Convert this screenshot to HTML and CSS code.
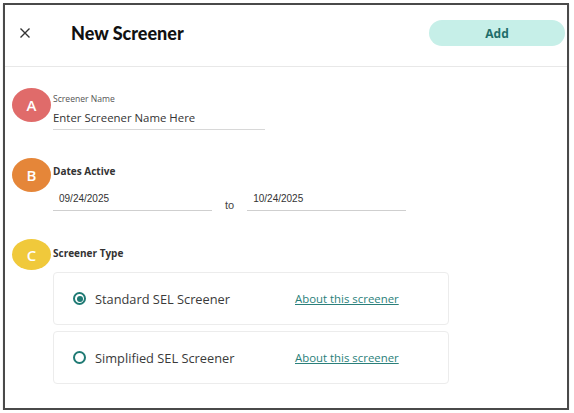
FILE: index.html
```html
<!DOCTYPE html>
<html>
<head>
<meta charset="utf-8">
<link rel="stylesheet" href="styles.css">
</head>
<body>
<div class="frame">
  <header class="header">
    <svg class="close" width="10" height="10" viewBox="0 0 10 10"><path d="M0.5 0.5 L9.5 9.5 M9.5 0.5 L0.5 9.5" stroke="#333" stroke-width="1.4" fill="none"/></svg>
    <h1 class="title">New Screener</h1>
    <button class="add">Add</button>
  </header>

  <section class="row row-a">
    <div class="badge badge-a">A</div>
    <div class="content">
      <div class="small-label">Screener Name</div>
      <div class="name-input">Enter Screener Name Here</div>
    </div>
  </section>

  <section class="row row-b">
    <div class="badge badge-b">B</div>
    <div class="content">
      <div class="bold-label">Dates Active</div>
      <div class="dates">
        <div class="date-input">09/24/2025</div>
        <div class="to">to</div>
        <div class="date-input">10/24/2025</div>
      </div>
    </div>
  </section>

  <section class="row row-c">
    <div class="badge badge-c">C</div>
    <div class="content">
      <div class="bold-label label-c">Screener Type</div>
      <div class="cards">
        <div class="card">
          <span class="radio checked"></span>
          <span class="option">Standard SEL Screener</span>
          <a class="about">About this screener</a>
        </div>
        <div class="card">
          <span class="radio"></span>
          <span class="option">Simplified SEL Screener</span>
          <a class="about">About this screener</a>
        </div>
      </div>
    </div>
  </section>
</div>
</body>
</html>
```

FILE: styles.css
```css
* { box-sizing: border-box; }
html, body { margin: 0; padding: 0; background: #fff; }
body { font-family: "Open Sans", "Noto Sans", sans-serif; color: #333; }

.frame {
  margin: 3px 0 0 3px;
  width: 566px;
  height: 407px;
  border: 2px solid #4a4a4a;
  box-shadow: 0 1px 1px #bbb;
  background: #fff;
}

.header {
  display: flex;
  align-items: flex-start;
  height: 62px;
  padding-top: 15px;
  border-bottom: 1px solid #e8e8e8;
}
.close { margin: 8px 0 0 15px; flex: none; }
.title {
  margin: 0 0 0 41px;
  font-family: Lato, sans-serif;
  font-weight: 900;
  font-size: 18px;
  line-height: 26px;
  color: #111;
}
.add {
  margin-left: auto;
  margin-right: 2px;
  width: 136px;
  height: 26px;
  border: none;
  border-radius: 13px;
  background: #c6efe8;
  color: #1f6d69;
  font-family: "Open Sans", sans-serif;
  font-weight: 700;
  font-size: 12px;
  padding: 0;
}

.row { display: flex; align-items: flex-start; padding-left: 7px; }
.row-a { margin-top: 21px; }
.row-b { margin-top: 28px; }
.row-c { margin-top: 27px; }

.badge {
  flex: none;
  width: 39px;
  height: 34px;
  border-radius: 50%;
  color: #fff;
  font-weight: 600;
  font-size: 15px;
  display: flex;
  align-items: center;
  justify-content: center;
  margin-right: 2px;
}
.badge-a { background: #e06b6a; }
.badge-b { background: #e58639; }
.badge-c { background: #f0c93b; height: 31px; }

.content { display: flex; flex-direction: column; }

.small-label {
  margin-top: 6px;
  font-size: 8.6px;
  line-height: 11px;
  color: #555;
}
.name-input {
  margin-top: 5px;
  width: 212px;
  font-size: 11.4px;
  line-height: 16px;
  color: #333;
  padding-bottom: 3px;
  border-bottom: 1px solid #d8d8d8;
}

.bold-label {
  margin-top: 7px;
  font-size: 10px;
  line-height: 12px;
  font-weight: 700;
  color: #333;
}
.label-c { margin-top: 8px; }

.dates { display: flex; align-items: flex-start; margin-top: 15px; }
.date-input {
  width: 159px;
  padding-left: 6px;
  padding-bottom: 4px;
  font-family: "Liberation Sans", Arial, sans-serif;
  font-size: 10px;
  line-height: 14px;
  color: #333;
  border-bottom: 1px solid #cfcfcf;
}
.to {
  margin: 0 13px;
  padding-top: 6px;
  font-family: "Liberation Sans", Arial, sans-serif;
  font-size: 11px;
  line-height: 14px;
  color: #444;
}

.cards { margin-top: 13px; display: flex; flex-direction: column; gap: 6px; }
.card {
  width: 396px;
  height: 53px;
  border: 1px solid #ececec;
  border-radius: 4px;
  display: flex;
  align-items: center;
  padding-left: 19px;
}
.radio {
  flex: none;
  width: 13px;
  height: 13px;
  border: 2px solid #1f7a74;
  border-radius: 50%;
  margin-right: 9px;
  display: flex;
  align-items: center;
  justify-content: center;
}
.radio.checked::after {
  content: "";
  width: 6px;
  height: 6px;
  border-radius: 50%;
  background: #1f7a74;
}
.option {
  width: 200px;
  font-size: 12.8px;
  color: #3a3a3a;
}
.about {
  font-size: 11.4px;
  color: #2a7f7a;
  text-decoration: underline;
}
```
